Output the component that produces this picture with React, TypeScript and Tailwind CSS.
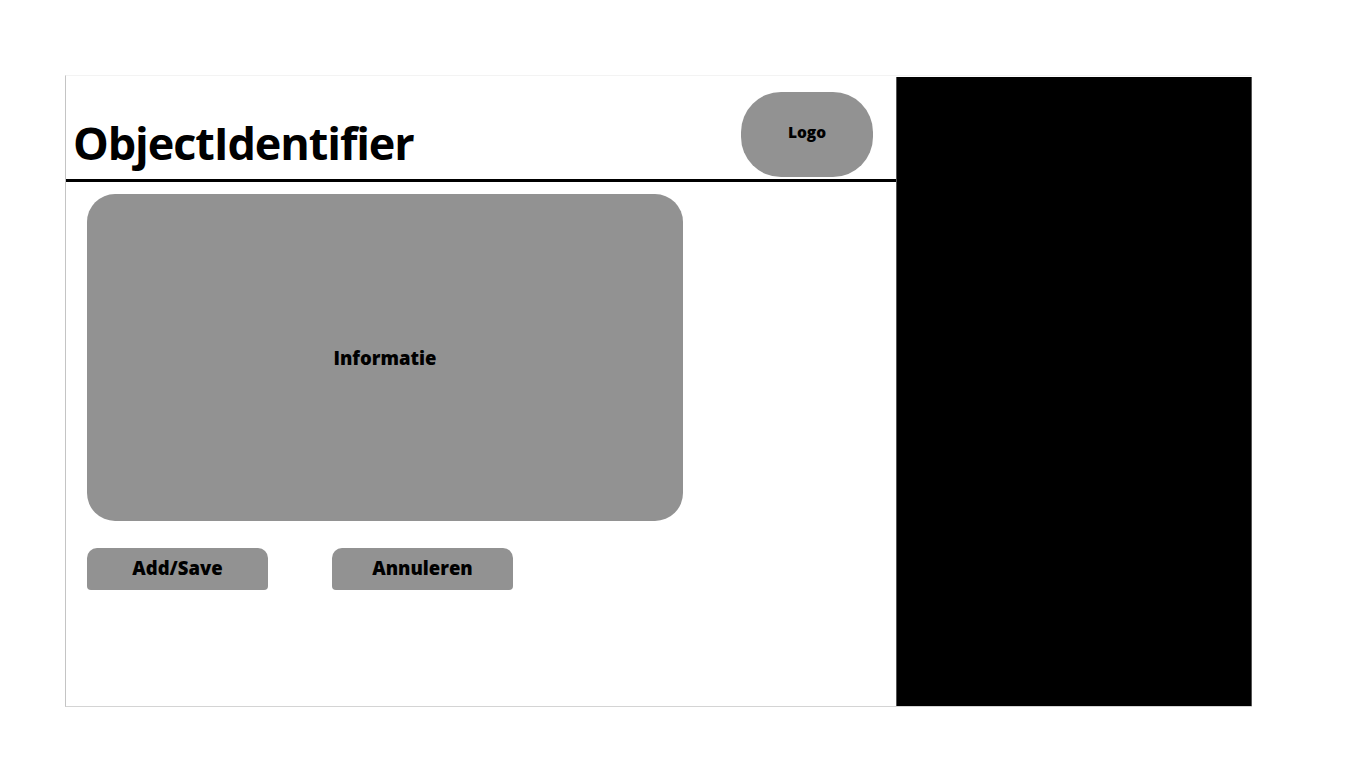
export default function App() {
  const font = { fontFamily: '"Open Sans", "Noto Sans", sans-serif' };
  return (
    <div className="w-[1366px] h-[768px] bg-white pt-[75px] pl-[65px]" style={font}>
      <div className="flex w-[1187px] h-[632px] border-t border-t-[#f3f3f3] border-l border-l-[#c4c4c4] border-b border-b-[#d4d4d4]">
        <div className="w-[830px] flex flex-col">
          <div className="h-[106px] border-b-[3px] border-black flex items-start justify-between">
            <h1 className="mt-[44px] ml-[7px] text-[45px] leading-[45px] font-bold text-black tracking-[-1.1px]">ObjectIdentifier</h1>
            <div className="mt-[16px] mr-[23px] w-[132px] h-[85px] rounded-[40px] bg-[#929292] flex items-center justify-center pb-[3px]">
              <span className="text-[15.5px] font-extrabold text-black">Logo</span>
            </div>
          </div>
          <div className="ml-[21px] mt-[12px] w-[596px] h-[327px] rounded-[28px] bg-[#929292] flex items-center justify-center">
            <span className="text-[18.5px] font-extrabold text-black">Informatie</span>
          </div>
          <div className="ml-[21px] mt-[27px] flex gap-[64px]">
            <button className="w-[181px] h-[42px] rounded-t-[10px] rounded-b-[4px] bg-[#929292] flex items-center justify-center pb-[2px] text-[18.5px] font-extrabold text-black">Add/Save</button>
            <button className="w-[181px] h-[42px] rounded-t-[10px] rounded-b-[4px] bg-[#929292] flex items-center justify-center pb-[2px] text-[18.5px] font-extrabold text-black">Annuleren</button>
          </div>
        </div>
        <div className="w-[356px] mt-[1px] bg-black border-x border-[#555]" />
      </div>
    </div>
  );
}
